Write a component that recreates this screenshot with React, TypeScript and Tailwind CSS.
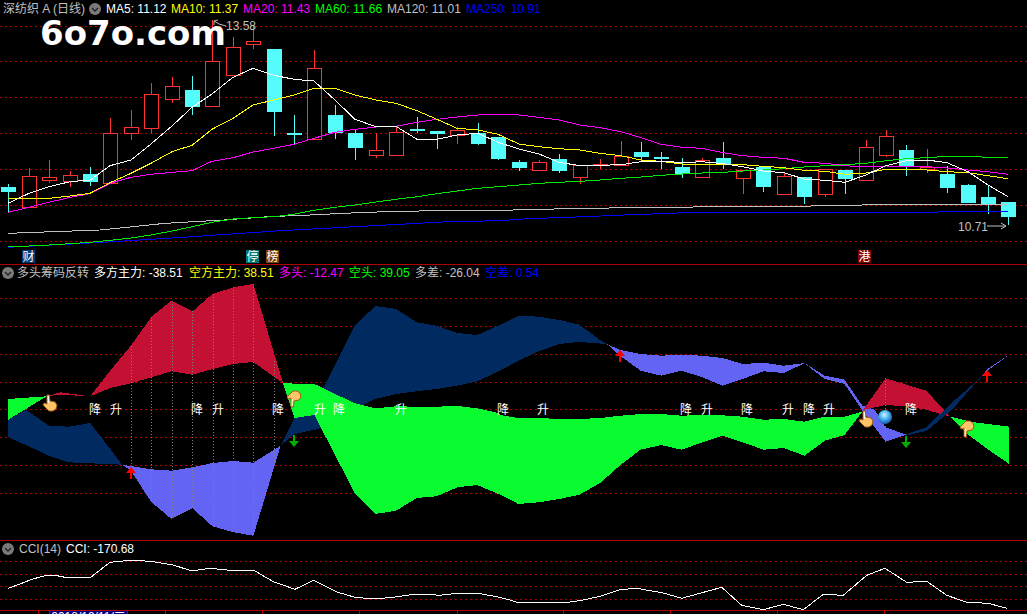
import React from "react";

const F1 = 2.904;
const F2 = 2.975;
const a = (x: number, y: number) => [x / F1, y / 3];
const b = (x: number, y: number) => [500 + x / F2, y / 3];
const pa = (x: number, y: number) => [x / F1, 264 + y / 3];
const pb = (x: number, y: number) => [500 + x / F2, 264 + y / 3];
const s = (pts: number[][]) => pts.map((p) => p[0].toFixed(1) + "," + p[1].toFixed(1)).join(" ");
const map = (f: (x: number, y: number) => number[], l: number[][]) => l.map((p) => f(p[0], p[1]));

const RED = "#ff3232";
const CY = "#54fcfc";
// [index, type, wickTop, bodyTop, bodyBottom, wickBottom]
const candles: [number, string, number, number, number, number][] = [
  [0, "c", 184, 187, 192, 212], [1, "r", 168, 176, 207, 207], [2, "r", 160, 177, 180, 183], [3, "r", 171, 175, 181, 187],
  [4, "c", 167, 174, 182, 186], [5, "r", 118, 133, 183, 183], [6, "r", 110, 127, 133, 140], [7, "r", 83, 94, 128, 133],
  [8, "r", 77, 86, 99, 103], [9, "c", 76, 90, 107, 115], [10, "r", 20, 61, 106, 106], [11, "r", 37, 47, 75, 75],
  [12, "r", 25, 41, 44, 49], [13, "c", 49, 49, 112, 136], [14, "c", 115, 133, 135, 144], [15, "r", 50, 68, 139, 139],
  [16, "c", 105, 115, 133, 139], [17, "c", 130, 133, 148, 160], [18, "r", 133, 150, 155, 158], [19, "r", 127, 132, 155, 155],
  [20, "c", 117, 129, 131, 133], [21, "c", 131, 131, 134, 149], [22, "r", 127, 130, 135, 144], [23, "c", 123, 133, 144, 145],
  [24, "c", 137, 137, 159, 160], [25, "c", 160, 162, 168, 171], [26, "r", 160, 162, 170, 170], [27, "c", 154, 159, 171, 173],
  [28, "r", 165, 165, 177, 184], [29, "r", 159, 164, 165, 169], [30, "r", 141, 156, 165, 166], [31, "c", 142, 152, 157, 162],
  [32, "c", 152, 157, 159, 169], [33, "c", 158, 167, 174, 178], [34, "r", 158, 160, 177, 177], [35, "c", 142, 158, 165, 169],
  [36, "r", 170, 170, 178, 194], [37, "c", 166, 167, 187, 192], [38, "r", 173, 176, 194, 195], [39, "c", 177, 177, 197, 204],
  [40, "r", 169, 169, 194, 197], [41, "c", 170, 170, 179, 194], [42, "r", 140, 147, 180, 181], [43, "r", 130, 136, 155, 157],
  [44, "c", 145, 150, 166, 176], [45, "r", 149, 167, 169, 173], [46, "c", 166, 174, 188, 193], [47, "c", 184, 185, 203, 203],
  [48, "c", 186, 197, 204, 214], [49, "c", 202, 202, 217, 225],
];
const cx = (i: number) => Math.round(8.3 + 20.41 * i);

const byIdx = (ys: number[]) => ys.map((y, i) => [cx(i), y / 3]);
const ma5 = byIdx([610, 580, 560, 545, 540, 497, 480, 432, 378, 322, 282, 232, 205, 226, 238, 243, 300, 358, 380, 379, 418, 418, 405, 400, 427, 447, 462, 487, 497, 496, 494, 485, 483, 488, 485, 491, 500, 513, 518, 537, 541, 547, 525, 497, 482, 480, 488, 515, 555, 590]);
const ma10 = byIdx([596, 596, 595, 588, 580, 548, 520, 490, 455, 436, 388, 355, 315, 300, 285, 265, 265, 285, 300, 310, 332, 358, 385, 390, 403, 432, 440, 446, 450, 460, 467, 480, 484, 492, 492, 492, 494, 499, 503, 511, 514, 523, 519, 508, 508, 510, 515, 518, 527, 536]);
const ma20 = byIdx([637, 622, 607, 592, 581, 550, 532, 523, 517, 512, 484, 473, 456, 445, 433, 415, 397, 388, 381, 379, 367, 358, 351, 345, 343, 345, 352, 360, 375, 383, 395, 413, 433, 442, 445, 458, 467, 472, 475, 487, 490, 497, 501, 498, 499, 500, 504, 510, 515, 523]);
const ma60 = byIdx([740, 738, 735, 731, 727, 721, 714, 705, 693, 680, 667, 657, 653, 650, 643, 631, 622, 615, 606, 598, 590, 581, 573, 565, 560, 555, 550, 547, 544, 540, 535, 531, 526, 522, 519, 517, 513, 510, 506, 501, 497, 494, 490, 482, 476, 473, 469, 469, 472, 472]);
const ma120 = [...map(a, [[24, 700], [290, 690], [340, 685], [480, 670], [650, 660], [780, 650], [900, 645], [1060, 637], [1300, 631]]), ...map(b, [[0, 631], [200, 626], [450, 622], [870, 619], [1060, 616], [1115, 613], [1510, 613]])];
const ma250 = [...map(a, [[24, 742], [300, 727], [530, 712], [800, 693], [1030, 680], [1300, 665]]), ...map(b, [[0, 662], [80, 656], [200, 652], [300, 648], [390, 644], [510, 640], [570, 637], [1300, 636], [1510, 634]])];

const NAVY = "#002a60";
const CRIM = "#c41033";
const PERI = "#6464f4";
const LIME = "#08fc30";

const bands: [string, number[][]][] = [
  [LIME, map(pa, [[24, 405], [135, 397], [24, 467]])],
  [CRIM, map(pa, [[135, 397], [175, 385], [262, 397], [320, 320], [380, 245], [440, 158], [498, 110], [559, 142], [617, 90], [678, 70], [736, 60], [822, 358], [736, 294], [678, 300], [617, 315], [559, 332], [498, 322], [440, 340], [380, 358], [320, 372], [262, 397], [175, 392], [135, 397]])],
  [NAVY, map(pa, [[24, 467], [75, 437], [142, 485], [200, 488], [262, 477], [355, 602], [262, 598], [200, 595], [142, 575], [75, 543], [24, 520]])],
  [PERI, map(pa, [[355, 602], [440, 616], [498, 620], [559, 610], [617, 597], [678, 591], [736, 596], [815, 545], [736, 815], [678, 805], [617, 787], [559, 733], [498, 765], [440, 715], [380, 620]])],
  [NAVY, [...map(pa, [[815, 545], [855, 462], [940, 370], [1030, 185], [1090, 126], [1150, 135], [1210, 175], [1267, 185], [1329, 207], [1386, 213], [1447, 185], [1505, 155]]), ...map(pb, [[55, 155], [115, 158], [177, 168], [236, 182], [298, 228], [318, 240], [236, 234], [177, 240], [115, 262], [55, 290], [0, 320]]), ...map(pa, [[1386, 352], [1329, 365], [1267, 375], [1209, 382], [1150, 390], [1090, 405], [1030, 435], [925, 495], [855, 510]])]],
  [LIME, [...map(pa, [[822, 358], [913, 360], [1030, 418], [1090, 433], [1150, 427], [1210, 428], [1267, 428], [1329, 426], [1386, 433], [1447, 447]]), ...map(pb, [[0, 453], [55, 462], [115, 462], [177, 465], [236, 465], [298, 462], [358, 455], [418, 450], [480, 450], [540, 455], [602, 453], [662, 454], [722, 458], [784, 467], [844, 465], [906, 473], [966, 458], [1025, 458], [1078, 443], [1025, 513], [966, 530], [906, 575], [844, 552], [784, 557], [722, 535], [662, 515], [602, 535], [540, 557], [480, 543], [418, 557], [358, 603], [298, 657], [236, 692], [177, 705], [115, 715], [55, 720], [0, 692]]), ...map(pa, [[1386, 663], [1329, 670], [1267, 697], [1210, 702], [1150, 740], [1090, 750], [1030, 687], [913, 453], [855, 462]])]],
  [PERI, map(pb, [[318, 240], [357, 258], [418, 270], [480, 275], [540, 272], [602, 275], [662, 282], [722, 300], [784, 296], [844, 305], [906, 297], [966, 335], [1025, 347], [1078, 425], [1115, 437], [1147, 490], [1209, 512], [1147, 533], [1078, 440], [1025, 360], [966, 345], [906, 298], [844, 327], [784, 322], [722, 345], [662, 365], [602, 340], [540, 320], [480, 335], [418, 320], [357, 275]])],
  [CRIM, map(pb, [[1080, 438], [1147, 343], [1268, 380], [1340, 458], [1268, 437], [1209, 427], [1147, 423]])],
  [NAVY, map(pb, [[1209, 511], [1268, 490], [1340, 420], [1430, 340], [1345, 437], [1270, 500], [1209, 515]])],
  [PERI, map(pb, [[1430, 340], [1450, 315], [1515, 272], [1450, 320]])],
  [LIME, map(pb, [[1340, 458], [1410, 475], [1515, 488], [1515, 600], [1450, 555], [1390, 510]])],
];

const vlines: [number, number, number][] = [
  [131, 346, 471], [151, 317, 502], [172, 301, 519], [192, 311, 508], [213, 294, 526], [233, 287, 532], [253, 284, 535], [274, 361, 464], [885, 378, 442],
];
const words: [string, number][] = [["降", 95], ["升", 116], ["降", 197], ["升", 218], ["降", 278], ["升", 320], ["降", 339], ["升", 401], ["降", 503], ["升", 543], ["降", 686], ["升", 707], ["降", 747], ["升", 788], ["降", 809], ["升", 829], ["降", 911]];

const cci = [...[[25, 160], [60, 147], [95, 133], [140, 121], [165, 121], [195, 127], [272, 127], [330, 82], [380, 77], [425, 77], [465, 81], [520, 90], [575, 108], [630, 100], [680, 105], [760, 105], [820, 140], [885, 163], [940, 136], [1010, 171], [1065, 187], [1120, 192], [1180, 187], [1240, 178], [1280, 178], [1320, 181], [1360, 176], [1440, 176], [1490, 185]].map((p) => [p[0] / 3, 535 + p[1] / 3]), ...[[0, 195], [20, 202], [175, 202], [215, 196], [270, 184], [330, 164], [380, 160], [460, 174], [515, 190], [635, 157], [695, 211], [760, 224], [820, 208], [880, 224], [940, 178], [1000, 181], [1070, 121], [1125, 100], [1190, 142], [1250, 139], [1310, 181], [1370, 202], [1435, 205], [1490, 220]].map((p) => [510 + p[0] / 3, 535 + p[1] / 3])];

function Grid({ ys }: { ys: number[] }) {
  return (
    <g stroke="#b00000" strokeDasharray="2 3" shapeRendering="crispEdges">
      {ys.map((y) => (
        <line key={y} x1="0" x2="1027" y1={y + 0.5} y2={y + 0.5} />
      ))}
    </g>
  );
}

function Chevron() {
  return (
    <svg viewBox="0 0 12 12" className="w-3 h-3 shrink-0">
      <circle cx="6" cy="6" r="6" fill="#7a7a7a" />
      <path d="M3 5 L6 8 L9 5" fill="none" stroke="#222222" strokeWidth="1.4" />
    </svg>
  );
}

function Hand({ x, y, down, white }: { x: number; y: number; down?: boolean; white?: boolean }) {
  return (
    <g transform={down ? `translate(${x},${y + 16}) scale(1,-1)` : `translate(${x},${y})`}>
      <path d="M4 0 L6.5 0 L7 6 L12 7 L14 10 L13 14 L10 16 L6 16 L1 11 L0 9 L2 8 L4 9 Z" fill="#ffc468" stroke="#9a5a18" strokeWidth="1" strokeLinejoin="round" />
      <path d="M4.6 1 L5.8 1 L6 8 L4.8 8 Z" fill={white ? "#ffffff" : "#fff0d0"} />
    </g>
  );
}

function UpArrow({ x, y }: { x: number; y: number }) {
  return <path d={`M${x} ${y} L${x + 5} ${y + 6} L${x + 1} ${y + 6} L${x + 1} ${y + 12} L${x - 1} ${y + 12} L${x - 1} ${y + 6} L${x - 5} ${y + 6} Z`} fill="#ff0000" />;
}
function DownArrow({ x, y }: { x: number; y: number }) {
  return <path d={`M${x} ${y + 12} L${x + 5} ${y + 6} L${x + 1} ${y + 6} L${x + 1} ${y} L${x - 1} ${y} L${x - 1} ${y + 6} L${x - 5} ${y + 6} Z`} fill="#00b000" />;
}

function Badge({ x, w = 13, t, bg }: { x: number; w?: number; t: string; bg: string }) {
  return (
    <g>
      <rect x={x} y="250" width={w} height="13" fill={bg} />
      <text x={x + w / 2} y="261" textAnchor="middle" fill="#ffffff" fontSize="12">
        {t}
      </text>
    </g>
  );
}

export default function App() {
  return (
    <div className="w-[1027px] h-[614px] bg-black flex flex-col overflow-hidden text-[12px] leading-[14px] font-['Liberation_Sans','Noto_Sans_CJK_SC',sans-serif]">
      <div className="relative h-[265px] shrink-0 border-b border-[#b00000]">
        <svg viewBox="0 0 1027 264" className="block w-[1027px] h-[264px]">
          <Grid ys={[26, 61, 97, 133, 169, 205, 241]} />
          <g shapeRendering="crispEdges">
            {candles.map(([i, t, wt, bt, bb, wb]) => {
              const x = cx(i);
              return t === "c" ? (
                <g key={i}>
                  <line x1={x + 0.5} x2={x + 0.5} y1={wt} y2={wb} stroke={CY} />
                  <rect x={x - 7} y={bt} width="15" height={Math.max(bb - bt, 1)} fill={CY} />
                </g>
              ) : (
                <g key={i}>
                  <line x1={x + 0.5} x2={x + 0.5} y1={wt} y2={wb} stroke={RED} />
                  <rect x={x - 6.5} y={bt + 0.5} width="14" height={Math.max(bb - bt, 1)} fill="#000000" stroke={RED} />
                </g>
              );
            })}
          </g>
          <g fill="none" strokeWidth="1" shapeRendering="crispEdges">
            <polyline points={s(ma250)} stroke="#0000ff" />
            <polyline points={s(ma120)} stroke="#c0c0c0" />
            <polyline points={s(ma60)} stroke="#00e800" />
            <polyline points={s(ma20)} stroke="#ff00ff" />
            <polyline points={s(ma10)} stroke="#ffff00" />
            <polyline points={s(ma5)} stroke="#ffffff" />
          </g>
          <path d="M226 26 L219 24 L214 21 M214 21 L218 20 M214 21 L214 25" fill="none" stroke="#c0c0c0" />
          <text x="226" y="30" fill="#c0c0c0" fontSize="12">13.58</text>
          <text x="958" y="231" fill="#c0c0c0" fontSize="12">10.71</text>
          <path d="M987 226 H1006 M1001 223 L1006 226 L1001 229" fill="none" stroke="#c0c0c0" />
          <Badge x={22} t="财" bg="#003a78" />
          <Badge x={246} t="停" bg="#007878" />
          <Badge x={266} t="榜" bg="#804000" />
          <Badge x={858} t="港" bg="#800000" />
        </svg>
        <div className="absolute left-[3px] top-[2px] flex items-center whitespace-nowrap">
          <span className="w-[86px] text-[#c0c0c0]">深纺织 A (日线)</span>
          <Chevron />
          <span className="ml-[5px] w-[65px] text-white">MA5: 11.12</span>
          <span className="w-[72px] text-[#ffff00]">MA10: 11.37</span>
          <span className="w-[72px] text-[#ff00ff]">MA20: 11.43</span>
          <span className="w-[72px] text-[#00ff00]">MA60: 11.66</span>
          <span className="w-[79px] text-[#c0c0c0]">MA120: 11.01</span>
          <span className="text-[#0000ff]">MA250: 10.91</span>
        </div>
        <div className="absolute left-[40px] top-[13px] text-[34px] leading-[40px] font-bold text-white font-['DejaVu_Sans',sans-serif]">6o7o.com</div>
      </div>

      <div className="relative h-[276px] shrink-0 border-b border-[#b00000]">
        <svg viewBox="0 265 1027 275" className="block w-[1027px] h-[275px]">
          <Grid ys={[298, 326, 354, 382, 409, 437, 465, 493]} />
          <g shapeRendering="crispEdges">
            {bands.map(([c, pts], i) => (
              <polygon key={i} points={s(pts)} fill={c} />
            ))}
          </g>
          <g stroke="#808080" strokeDasharray="1 2" shapeRendering="crispEdges">
            {vlines.map(([x, y1, y2]) => (
              <line key={x} x1={x + 0.5} x2={x + 0.5} y1={y1} y2={y2} />
            ))}
          </g>
          {words.map(([t, x], i) => (
            <text key={i} x={x} y="414" textAnchor="middle" fill="#ffffff" fontSize="12">
              {t}
            </text>
          ))}
          <Hand x={43} y={395} white />
          <Hand x={287} y={391} down />
          <Hand x={859} y={411} white />
          <Hand x={960} y={421} down />
          <UpArrow x={131} y={467} />
          <UpArrow x={620} y={350} />
          <UpArrow x={987} y={370} />
          <DownArrow x={294} y={435} />
          <DownArrow x={906} y={436} />
          <defs>
            <radialGradient id="globe" cx="45%" cy="35%" r="70%">
              <stop offset="0%" stopColor="#d8f4ff" />
              <stop offset="45%" stopColor="#4ab4f4" />
              <stop offset="100%" stopColor="#0c4a9c" />
            </radialGradient>
          </defs>
          <circle cx="885" cy="417" r="7" fill="url(#globe)" />
        </svg>
        <div className="absolute left-[2px] top-[1px] flex items-center whitespace-nowrap">
          <Chevron />
          <span className="ml-[3px] w-[77px] text-[#c0c0c0]">多头筹码反转</span>
          <span className="w-[95px] text-white">多方主力: -38.51</span>
          <span className="w-[90px] text-[#ffff00]">空方主力: 38.51</span>
          <span className="w-[70px] text-[#ff00ff]">多头: -12.47</span>
          <span className="w-[66px] text-[#00ff00]">空头: 39.05</span>
          <span className="w-[70px] text-[#c0c0c0]">多差: -26.04</span>
          <span className="text-[#0000ff]">空差: 0.54</span>
        </div>
      </div>

      <div className="relative h-[70px] shrink-0 border-b border-[#b00000]">
        <svg viewBox="0 541 1027 69" className="block w-[1027px] h-[69px]">
          <Grid ys={[561, 574, 586, 599]} />
          <polyline points={s(cci)} fill="none" stroke="#ffffff" shapeRendering="crispEdges" />
        </svg>
        <div className="absolute left-[2px] top-[1px] flex items-center whitespace-nowrap">
          <Chevron />
          <span className="ml-[5px] w-[47px] text-[#c0c0c0]">CCI(14)</span>
          <span className="text-white">CCI: -170.68</span>
        </div>
      </div>

      <div className="relative h-[3px] overflow-hidden">
        <div className="absolute left-[38px] top-0 w-px h-[3px] bg-[#b00000]" />
        <div className="absolute left-[49px] top-0 w-[79px] h-[3px] bg-[#000080] border-x border-[#b00000] overflow-hidden text-[12px] leading-[12px] text-white text-center whitespace-nowrap">
          2018/12/11/二
        </div>
        {[165, 262, 359, 457, 563, 670, 777, 884].map((x) => (
          <div key={x} className="absolute top-0 w-px h-[3px] bg-[#b00000]" style={{ left: x }} />
        ))}
      </div>
    </div>
  );
}
